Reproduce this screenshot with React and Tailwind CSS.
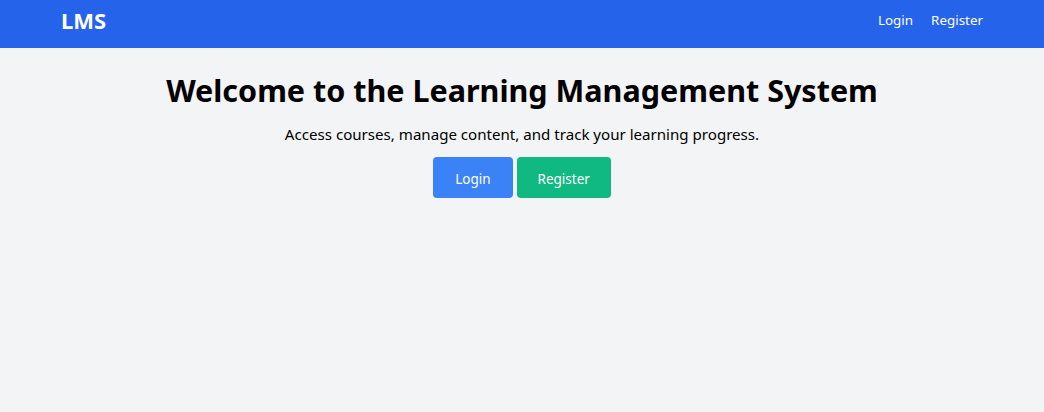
import React from 'react';

const font = { fontFamily: '"Noto Sans", "Open Sans", sans-serif' };

const Navbar = () => (
  <nav className="bg-[#2563eb] text-white h-12">
    <div className="mx-auto max-w-5xl h-full px-[51px] pb-2 flex items-center justify-between">
      <span className="text-[22px] font-bold">LMS</span>
      <div className="flex items-center gap-[18px] text-[13.4px]">
        <a href="#">Login</a>
        <a href="#">Register</a>
      </div>
    </div>
  </nav>
);

const App = () => {
  return (
    <div className="min-h-screen bg-[#f3f4f6] text-black" style={font}>
      <Navbar />
      <main className="flex flex-col items-center pt-6">
        <h1 className="text-[30.5px] font-bold leading-9">
          Welcome to the Learning Management System
        </h1>
        <p className="mt-[14px] text-[15.1px] leading-6">
          Access courses, manage content, and track your learning progress.
        </p>
        <div className="mt-[11px] flex gap-1">
          <button className="bg-[#3b82f6] text-white px-[22px] pt-[3px] h-[41px] rounded text-[13.5px]">
            Login
          </button>
          <button className="bg-[#10b981] text-white px-[21px] pt-[3px] h-[41px] rounded text-[13.5px]">
            Register
          </button>
        </div>
      </main>
    </div>
  );
};

export default App;
